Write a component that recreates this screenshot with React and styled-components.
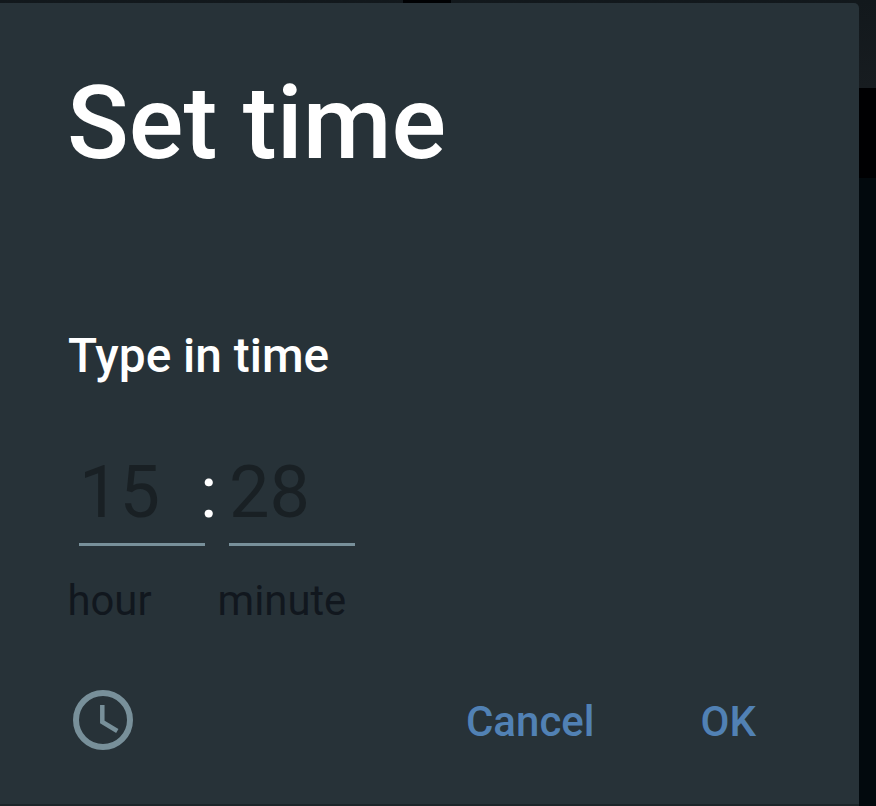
import styled, { createGlobalStyle } from 'styled-components';

const GlobalStyle = createGlobalStyle`
  body {
    margin: 0;
    font-family: Roboto, 'Liberation Sans', sans-serif;
    background: #000306;
  }
`;

const Screen = styled.div`
  box-sizing: border-box;
  width: 876px;
  height: 806px;
  padding: 3px 17px 2px 0;
  overflow: hidden;
  background:
    linear-gradient(#000103, #000103) 403px 0 / 48px 3px no-repeat,
    linear-gradient(#12181c, #171c20) 0 0 / 100% 88px no-repeat,
    linear-gradient(#000002, #000002) 0 88px / 100% 90px no-repeat,
    #02090d;
`;

const Dialog = styled.section`
  box-sizing: border-box;
  display: flex;
  flex-direction: column;
  height: 801px;
  padding: 60px 68px 0;
  border-radius: 0 5px 0 0;
  background: #273238;
  box-shadow: 0 2px 0 #1c2529;
`;

const Title = styled.h1`
  margin: 0 0 0 -1px;
  font-size: 102px;
  font-weight: 500;
  line-height: 120px;
  white-space: nowrap;
  color: #fff;
`;

const Subtitle = styled.h2`
  margin: 145px 0 0;
  font-size: 47.8px;
  font-weight: 500;
  line-height: 56px;
  color: #fff;
`;

const Fields = styled.div`
  display: flex;
  margin-top: 67px;
`;

const Field = styled.div`
  width: 126px;
  margin-left: ${({ $first }) => ($first ? '11px' : '0')};
`;

const Value = styled.div`
  height: 92px;
  border-bottom: 3px solid #78909a;
  font-size: 72px;
  line-height: 84px;
  color: #192024;
`;

const Label = styled.div`
  margin: 30px 0 0 -11.5px;
  font-size: 41.8px;
  line-height: 50px;
  color: #11171e;
`;

const Colon = styled.span`
  width: 24px;
  margin-left: -5px;
  margin-right: 5px;
  font-size: 72px;
  line-height: 84px;
  color: #fff;
`;

const Footer = styled.footer`
  display: flex;
  align-items: center;
  height: 60px;
  margin: 64px 35px 0 5px;
`;

const ModeButton = styled.button`
  display: flex;
  margin-right: auto;
  padding: 0;
  border: 0;
  background: none;
`;

const TextButton = styled.button`
  margin: 4px 0 0 ${({ $gap }) => $gap || '0'};
  padding: 0;
  border: 0;
  background: none;
  font: 500 42px/50px Roboto, 'Liberation Sans', sans-serif;
  color: #5181b4;
`;

const ClockIcon = () => (
  <svg width="60" height="60" viewBox="0 0 60 60" fill="none" stroke="#78909a">
    <circle cx="30" cy="30" r="27" strokeWidth="6" />
    <path d="M29.3 15v17l15 9" strokeWidth="4.5" />
  </svg>
);

const App = () => {
  return (
    <Screen>
      <GlobalStyle />
      <Dialog>
        <Title>Set time</Title>
        <Subtitle>Type in time</Subtitle>
        <Fields>
          <Field $first>
            <Value>15</Value>
            <Label>hour</Label>
          </Field>
          <Colon>:</Colon>
          <Field>
            <Value>28</Value>
            <Label>minute</Label>
          </Field>
        </Fields>
        <Footer>
          <ModeButton aria-label="clock">
            <ClockIcon />
          </ModeButton>
          <TextButton>Cancel</TextButton>
          <TextButton $gap="106px">OK</TextButton>
        </Footer>
      </Dialog>
    </Screen>
  );
};

export default App;
